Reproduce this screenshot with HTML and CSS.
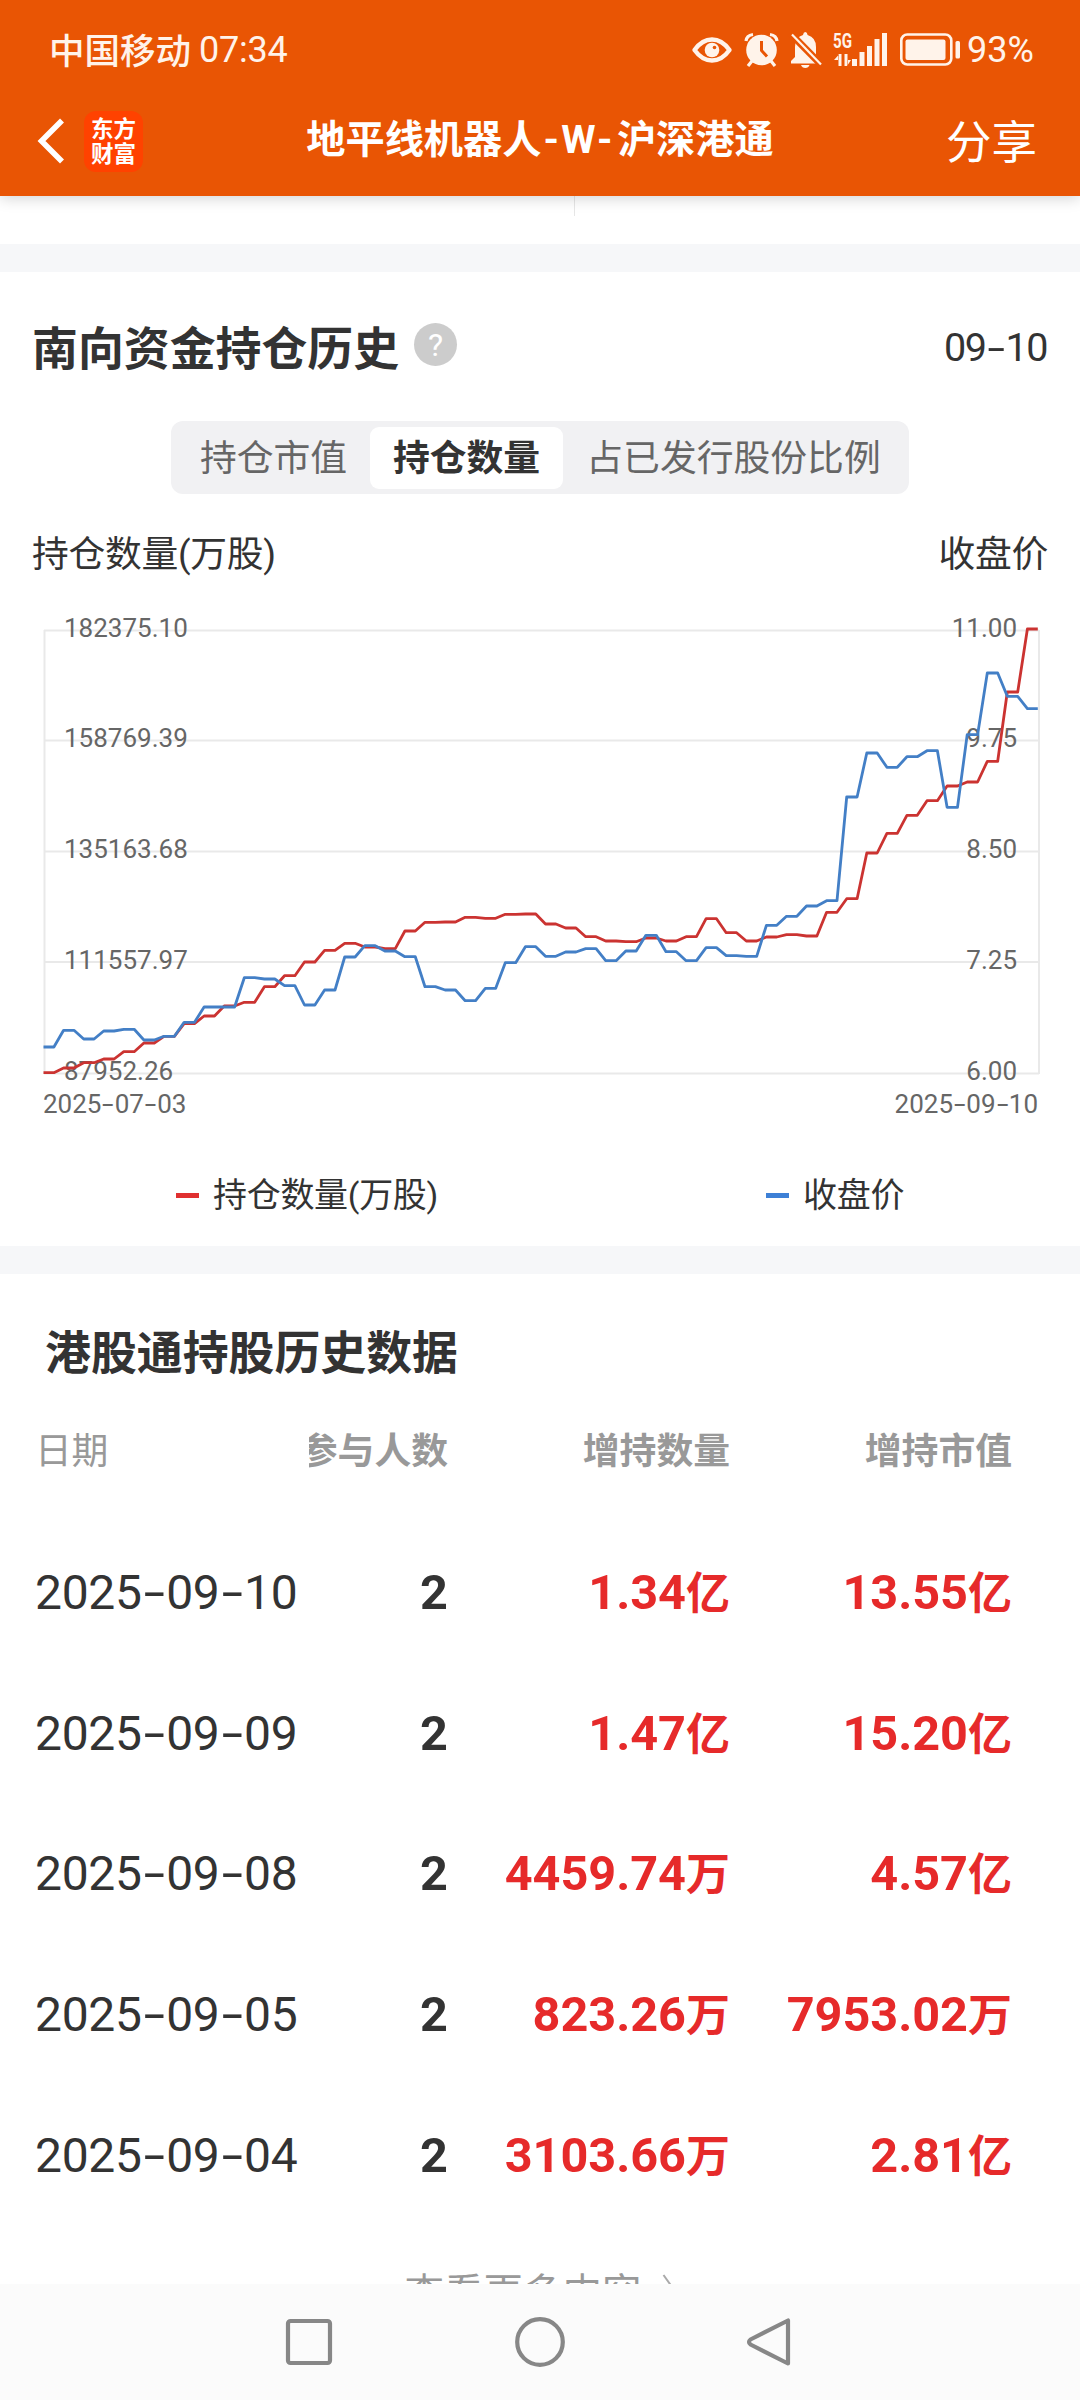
FILE: index.html
```html
<!DOCTYPE html>
<html lang="zh-CN">
<head>
    <meta charset="UTF-8">
    <meta name="viewport" content="width=device-width, initial-scale=1.0">
    <title>地平线机器人-W-沪深港通</title>
    <link rel="stylesheet" href="styles.css">
</head>
<body>
    <header class="header">
        <div class="status-bar">
            <span class="carrier">中国移动</span>
            <span class="clock">07:34</span>
            <svg class="status-icons" width="272" height="40" viewBox="690 30 272 40">
                <!-- eye -->
                <path d="M694.5 50 Q702 39.5 712 39.5 T729.5 50 Q722 60.5 712 60.5 T694.5 50Z" fill="none" stroke="#fff3ea" stroke-width="4.4" stroke-linejoin="round"/>
                <circle cx="712" cy="50" r="7.3"/>
                <circle cx="714.5" cy="47.5" r="1.8" fill="#e95504"/>
                <!-- alarm -->
                <circle cx="761.5" cy="50" r="15.3"/>
                <path d="M746 41 Q746.5 35.5 753 34.5 M777 41 Q776.5 35.5 770 34.5 M752 61 L748 66 M771 61 L775 66" fill="none" stroke="#fff3ea" stroke-width="3.2"/>
                <path d="M761.5 41 V50.5 L767 56.5" fill="none" stroke="#e95504" stroke-width="3"/>
                <!-- bell off -->
                <path d="M791 63.5 V61 L795 57 V47 Q795.5 37 803 35 Q803.5 32 805.3 32 T807.6 35 Q816 37.5 816 47 V57 L820 63.5Z"/>
                <path d="M801 65 H809.5 Q808.5 68 805.3 68 T801 65Z"/>
                <path d="M790 33 L822 65.5" stroke="#e95504" stroke-width="7"/>
                <path d="M792 34.5 L821 64.5" stroke="#fff3ea" stroke-width="2.2"/>
                <!-- signal -->
                <text class="net" x="833" y="48" textLength="19" lengthAdjust="spacingAndGlyphs">5G</text>
                <path d="M838.5 54 V66 H841.5 V54Z M834 60 L839 54.5 V60Z M844.5 54 V66 H847.5 V54Z M847 66 V60 H851Z"/>
                <path d="M852 59h5v7h-5z M859.5 52h5v14h-5z M867 46h5v20h-5z M874.5 39h5v27h-5z M882 33h5v33h-5z"/>
                <!-- battery -->
                <rect x="901.3" y="34.5" width="50" height="30" rx="6" fill="none" stroke="#fff3ea" stroke-width="2.6"/>
                <rect x="905.5" y="39.5" width="40" height="20.5" rx="2"/>
                <rect x="955.5" y="41" width="4.5" height="17.5" rx="1.5"/>
            </svg>
            <span class="battery">93%</span>
        </div>
        <div class="title-bar">
            <svg class="back" width="30" height="50" viewBox="0 0 30 50">
                <path d="M26 4.5 L5.5 25 L26 45.5" fill="none" stroke="#fff" stroke-width="5.6"/>
            </svg>
            <div class="logo">东方<br>财富</div>
            <h1>地平线机器人<span>-W-</span>沪深港通</h1>
            <span class="share">分享</span>
        </div>
    </header>

    <main class="content">
        <div class="prev-card"><div class="divider"></div></div>

        <section class="card chart-card">
            <div class="card-head">
                <h2>南向资金持仓历史</h2>
                <span class="help">?</span>
                <span class="date">09<i>-</i>10</span>
            </div>

            <div class="tabs">
                <span class="tab">持仓市值</span>
                <span class="tab active">持仓数量</span>
                <span class="tab wide">占已发行股份比例</span>
            </div>

            <div class="axis-names">
                <span>持仓数量(万股)</span>
                <span>收盘价</span>
            </div>

            <svg class="chart" width="1080" height="490" viewBox="0 600 1080 490">
                <path class="grid" d="M44 630.5H1039 M44 740.5H1039 M44 851.5H1039 M44 962H1039 M44 1073.5H1039 M44.5 630V1074 M1039 630V1074"/>
                <g class="labels">
                    <text x="64" y="636.5">182375.10</text>
                    <text x="64" y="746.5">158769.39</text>
                    <text x="64" y="857.5">135163.68</text>
                    <text x="64" y="968.5">111557.97</text>
                    <text x="64" y="1079.5">87952.26</text>
                </g>
                <g class="labels right">
                    <text x="1017" y="636.5">11.00</text>
                    <text x="1017" y="746.5">9.75</text>
                    <text x="1017" y="857.5">8.50</text>
                    <text x="1017" y="968.5">7.25</text>
                    <text x="1017" y="1079.5">6.00</text>
                </g>
                <polyline id="holding" class="line red"/>
                <polyline id="price" class="line blue"/>
            </svg>

            <div class="x-axis">
                <span>2025<i>-</i>07<i>-</i>03</span>
                <span>2025<i>-</i>09<i>-</i>10</span>
            </div>

            <div class="legend">
                <span class="key red">持仓数量(万股)</span>
                <span class="key blue">收盘价</span>
            </div>
        </section>

        <section class="card table-card">
            <h2>港股通持股历史数据</h2>
            <div class="row head">
                <span>日期</span><b>参与人数</b><b>增持数量</b><b>增持市值</b>
            </div>
            <div class="row">
                <span>2025<i>-</i>09<i>-</i>10</span><b>2</b><b class="up">1.34<em>亿</em></b><b class="up">13.55<em>亿</em></b>
            </div>
            <div class="row">
                <span>2025<i>-</i>09<i>-</i>09</span><b>2</b><b class="up">1.47<em>亿</em></b><b class="up">15.20<em>亿</em></b>
            </div>
            <div class="row">
                <span>2025<i>-</i>09<i>-</i>08</span><b>2</b><b class="up">4459.74<em>万</em></b><b class="up">4.57<em>亿</em></b>
            </div>
            <div class="row">
                <span>2025<i>-</i>09<i>-</i>05</span><b>2</b><b class="up">823.26<em>万</em></b><b class="up">7953.02<em>万</em></b>
            </div>
            <div class="row">
                <span>2025<i>-</i>09<i>-</i>04</span><b>2</b><b class="up">3103.66<em>万</em></b><b class="up">2.81<em>亿</em></b>
            </div>
            <div class="more">
                查看更多内容
                <svg width="14" height="32" viewBox="0 0 14 32"><path d="M1.5 2 L11.5 16 L1.5 30" fill="none" stroke="#aaa" stroke-width="2"/></svg>
            </div>
        </section>
    </main>

    <nav class="nav-bar">
        <svg width="50" height="54" viewBox="0 0 50 54"><rect x="4" y="6" width="42" height="42" rx="2.5"/></svg>
        <svg width="54" height="54" viewBox="0 0 54 54"><circle cx="27" cy="27" r="22.8"/></svg>
        <svg width="50" height="54" viewBox="0 0 50 54"><path d="M42 5.5 V48.5 L4.5 29.5 Q1.500 27 4.5 24.5Z"/></svg>
    </nav>

    <script>
        // y positions on the chart, two points per trading day
        const holding = [1072.7, 1068, 1062.7, 1059, 1051.7, 1043, 1036.3, 1023.7, 1016, 1006,
            1002.3, 986.7, 975.7, 962, 950.3, 943.3, 947, 948.7, 931, 922.3,
            922, 917.3, 918.3, 914.3, 914, 924, 928, 936.7, 941, 941.7,
            938, 941, 936.7, 918.7, 932.7, 941, 937, 934.7, 936, 912.3,
            898.7, 853, 833.3, 815.3, 800.7, 786, 782, 761.3, 692, 629];
        const price = [1047, 1030.3, 1039, 1031, 1029.3, 1040, 1036.3, 1022.3, 1007, 1007,
            977.7, 979, 985.7, 1005, 990, 957, 945.7, 951, 956.7, 986.7,
            990, 1000.7, 988.3, 962.7, 946.7, 956.3, 952, 948.7, 960.7, 951,
            935.3, 951.7, 960.7, 947.7, 955.7, 956.3, 925.3, 916.3, 906, 900.7,
            797, 753, 767.3, 756.7, 750.7, 807.3, 734.7, 673, 696.3, 708.7];

        function drawLine(id, values) {
            const points = values.map((y, i) => {
                const x = 43.5 + i * 20.08;
                return `${x.toFixed(1)},${y} ${(x + 10.4).toFixed(1)},${y}`;
            });
            document.getElementById(id).setAttribute('points', points.join(' '));
        }

        drawLine('holding', holding);
        drawLine('price', price);
    </script>
</body>
</html>
```
FILE: styles.css
```css
* {
    box-sizing: border-box;
}
body {
    margin: 0;
    width: 1080px;
    height: 2400px;
    display: flex;
    flex-direction: column;
    overflow: hidden;
    background: #fff;
    color: #333;
    font-family: Roboto, "Noto Sans CJK SC", sans-serif;
}
h1, h2 {
    margin: 0;
    font-weight: 700;
}
/* wide dash used in dates */
i {
    display: inline-block;
    width: 0.51em;
    text-align: center;
    font-style: normal;
    transform: scaleX(1.6);
}

/* header */
.header {
    height: 196px;
    flex: none;
    background: #e95504;
    color: #fff;
    box-shadow: 0 2px 14px rgba(0, 0, 0, 0.18);
    z-index: 1;
}
.status-bar {
    height: 96px;
    padding: 4px 41px 0 49px;
    display: flex;
    align-items: center;
    color: #fff3ea;
    font-size: 36px;
}
.carrier {
    width: 150px;
    padding-bottom: 4px;
    font-size: 35.5px;
    font-weight: 500;
}
.clock {
    letter-spacing: -0.2px;
}
.status-icons {
    margin-left: auto;
    fill: #fff3ea;
}
.net {
    font-size: 21px;
    font-weight: 700;
}
.battery {
    width: 77px;
    padding-left: 5px;
}
.title-bar {
    height: 90px;
    padding: 0 43px 0 36px;
    display: flex;
    align-items: center;
}
.logo {
    width: 59px;
    height: 61px;
    margin-left: 18px;
    padding-top: 6px;
    border-radius: 12px;
    background: #ff4200;
    font-size: 22.5px;
    line-height: 25px;
    font-weight: 700;
    text-align: center;
}
h1 {
    flex: 1;
    padding-bottom: 10px;
    margin-left: -9px;
    text-align: center;
    font-size: 39.2px;
}
h1 span {
    padding: 0 2px;
    letter-spacing: 2.5px;
}
.share {
    padding-bottom: 5px;
    font-size: 45.5px;
}

/* content */
.content {
    flex: 1;
    min-height: 0;
    overflow: hidden;
    background: #f6f7f9;
}
.prev-card {
    height: 48px;
    background: #fff;
}
.divider {
    width: 1px;
    height: 20px;
    margin-left: 574px;
    background: #e6e6e6;
}
.card {
    margin-top: 28px;
    background: #fff;
}
.card h2 {
    font-size: 45.9px;
    line-height: 60px;
}
.chart-card {
    height: 974px;
}
.card-head {
    height: 149px;
    padding: 0 33px 0 32px;
    display: flex;
    align-items: center;
}
.card-head h2 {
    padding-top: 5px;
}
.help {
    width: 43px;
    height: 43px;
    margin: 0 auto 4px 15px;
    border-radius: 50%;
    background: #ccc;
    color: #fff;
    font-size: 32px;
    line-height: 44px;
    text-align: center;
}
.date {
    padding-top: 2px;
    font-size: 39.5px;
    letter-spacing: -1.5px;
}
.tabs {
    width: 738px;
    height: 73px;
    margin: 0 auto;
    padding: 6px 0 6px 6px;
    display: flex;
    border-radius: 12px;
    background: #f1f1f3;
    font-size: 36.8px;
    line-height: 64px;
    text-align: center;
    color: #666;
}
.tab {
    width: 193px;
    height: 62px;
    border-radius: 9px;
}
.tab.wide {
    width: 341px;
}
.tab.active {
    background: #fff;
    color: #333;
    font-weight: 700;
}
.axis-names {
    height: 106px;
    padding: 14px 32px 0;
    display: flex;
    justify-content: space-between;
    font-size: 36.8px;
    line-height: 94px;
    letter-spacing: -0.3px;
}

/* chart */
.chart {
    display: block;
}
.grid {
    fill: none;
    stroke: #e9e9e9;
    stroke-width: 2;
}
.labels {
    font-size: 26px;
    fill: #666;
}
.labels.right {
    text-anchor: end;
}
.line {
    fill: none;
    stroke-width: 2.8;
    stroke-linejoin: round;
}
.line.red {
    stroke: #cb3331;
}
.line.blue {
    stroke: #437fc6;
}
.x-axis {
    height: 26px;
    padding: 0 42px 0 43px;
    display: flex;
    justify-content: space-between;
    font-size: 26px;
    line-height: 28px;
    color: #666;
}
.legend {
    padding: 54px 0 0 176px;
    display: flex;
    gap: 328px;
    font-size: 34px;
    line-height: 50px;
    letter-spacing: -0.3px;
}
.key {
    display: flex;
    align-items: center;
    gap: 14px;
}
.key::before {
    content: "";
    width: 23px;
    height: 5px;
    background: #e03030;
}
.key.blue::before {
    background: #3d80d6;
}

/* table */
.table-card h2 {
    height: 154px;
    padding-left: 45px;
    line-height: 158px;
}
.row {
    height: 140.7px;
    padding-left: 35px;
    display: grid;
    grid-template-columns: 274px 139px 282px 282px;
    align-items: center;
    font-size: 48px;
}
.row span {
    letter-spacing: -0.3px;
}
.row b {
    display: flex;
    justify-content: flex-end;
    align-items: baseline;
    overflow: hidden;
    white-space: nowrap;
    font-size: 48.6px;
}
.row em {
    font-style: normal;
    font-size: 44px;
    line-height: 50px;
}
.row .up {
    color: #e62a2a;
}
.row.head {
    height: 48px;
    margin-bottom: 46px;
    font-size: 36.8px;
    line-height: 48px;
    color: #999;
}
.row.head b {
    font-size: 36.8px;
}
.more {
    height: 128px;
    display: flex;
    justify-content: center;
    align-items: center;
    gap: 20px;
    font-size: 39.5px;
    color: #999;
}

.nav-bar {
    height: 116px;
    flex: none;
    display: flex;
    justify-content: center;
    align-items: center;
    gap: 179px;
    background: #fbfbfb;
}
.nav-bar svg {
    fill: none;
    stroke: #878787;
    stroke-width: 4.2;
    stroke-linejoin: round;
}
```
